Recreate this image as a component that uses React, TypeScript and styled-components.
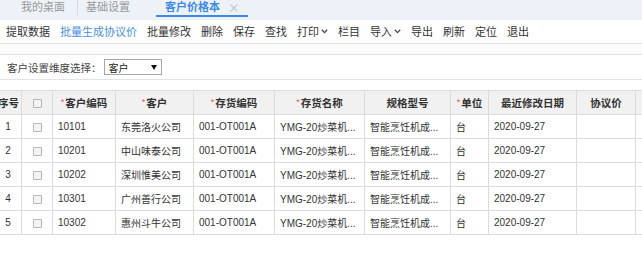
import React from "react";
import styled, { createGlobalStyle } from "styled-components";

const GlobalStyle = createGlobalStyle`
  html, body { margin: 0; padding: 0; background: #fff; }
  body { font-family: "Liberation Sans", "Noto Sans CJK SC", sans-serif; color: #333; }
  * { box-sizing: border-box; }
`;

const Page = styled.div`
  width: 642px;
  height: 254px;
  overflow: hidden;
  background: #fff;
`;

const TabBar = styled.div`
  display: flex;
  align-items: flex-start;
  height: 20px;
  padding-left: 8px;
  background: #edf1f8;
`;

const Tab = styled.div<{ $active?: boolean; $pl: number; $pr: number }>`
  display: flex;
  align-items: center;
  height: 17px;
  padding: 0 ${(p) => p.$pr}px 0 ${(p) => p.$pl}px;
  font-size: 11px;
  line-height: 15px;
  color: ${(p) => (p.$active ? "#3d8ae6" : "#9a9a9a")};
  font-weight: ${(p) => (p.$active ? 700 : 400)};
  border-bottom: 2px solid ${(p) => (p.$active ? "#3d8ae6" : "transparent")};
`;

const TabSep = styled.div`
  width: 1px;
  height: 15px;
  background: #d6dbe4;
`;

const TabGap = styled.div<{ $w: number }>`
  width: ${(p) => p.$w}px;
`;

const CloseIcon = styled.svg`
  margin-left: 10px;
  display: block;
`;

const Toolbar = styled.div`
  display: flex;
  align-items: center;
  height: 24px;
  padding-left: 6px;
  gap: 10px;
  border-bottom: 1px solid #e2e2e2;
  font-size: 11px;
`;

const ToolItem = styled.div<{ $blue?: boolean }>`
  display: flex;
  align-items: center;
  line-height: 14px;
  white-space: nowrap;
  color: ${(p) => (p.$blue ? "#4a8fe3" : "#333")};
`;

const Chevron = styled.svg`
  display: block;
  margin-left: 2px;
`;

const Band = styled.div`
  height: 11px;
  background: #fcfcfc;
  border-bottom: 1px solid #e4e4e4;
`;

const FilterRow = styled.div`
  display: flex;
  align-items: center;
  height: 25px;
  padding-left: 7px;
  border-bottom: 1px solid #e4e4e4;
  font-size: 10.5px;
  color: #444;
`;

const SelectBox = styled.div`
  display: flex;
  align-items: center;
  justify-content: space-between;
  width: 58px;
  height: 16px;
  margin-left: 2px;
  padding: 0 4px 0 4px;
  border: 1px solid #a8a8a8;
  background: #fff;
  font-size: 10px;
  color: #222;
`;

const TableWrap = styled.div`
  margin-top: 10px;
  overflow: hidden;
  width: 642px;
`;

const Table = styled.table`
  margin-left: -6px;
  border-collapse: collapse;
  table-layout: fixed;
  width: 729px;
  font-size: 10px;
`;

const Th = styled.th`
  height: 24px;
  padding: 0 3px;
  background: #f1f1f1;
  border: 1px solid #dcdcdc;
  font-size: 10.5px;
  font-weight: 700;
  color: #333;
  text-align: center;
  white-space: nowrap;
  overflow: hidden;
`;

const Td = styled.td<{ $center?: boolean }>`
  height: 24px;
  padding: 0 ${(p) => (p.$center ? 0 : 5)}px;
  border: 1px solid #dcdcdc;
  color: #333;
  text-align: ${(p) => (p.$center ? "center" : "left")};
  white-space: nowrap;
  overflow: hidden;
`;

const Req = styled.span`
  color: #e4575a;
  font-weight: 400;
  font-size: 9px;
  margin-right: 1px;
  vertical-align: 2px;
`;

const Check = styled.span`
  display: inline-block;
  width: 9px;
  height: 9px;
  border: 1px solid #b5b5b5;
  border-radius: 1px;
  background: #f4f4f4;
  vertical-align: middle;
`;

const tools: { label: string; blue?: boolean; menu?: boolean }[] = [
  { label: "提取数据" },
  { label: "批量生成协议价", blue: true },
  { label: "批量修改" },
  { label: "删除" },
  { label: "保存" },
  { label: "查找" },
  { label: "打印", menu: true },
  { label: "栏目" },
  { label: "导入", menu: true },
  { label: "导出" },
  { label: "刷新" },
  { label: "定位" },
  { label: "退出" },
];

const cols = [27, 31, 63, 78, 81, 90, 86, 38, 88, 59, 88];

const headers: { label: string; req?: boolean }[] = [
  { label: "序号" },
  { label: "" },
  { label: "客户编码", req: true },
  { label: "客户", req: true },
  { label: "存货编码", req: true },
  { label: "存货名称", req: true },
  { label: "规格型号" },
  { label: "单位", req: true },
  { label: "最近修改日期" },
  { label: "协议价" },
  { label: "" },
];

const rows = [
  ["1", "10101", "东莞洛火公司"],
  ["2", "10201", "中山味泰公司"],
  ["3", "10202", "深圳惟美公司"],
  ["4", "10301", "广州善行公司"],
  ["5", "10302", "惠州斗牛公司"],
];

export default function App() {
  return (
    <Page>
      <GlobalStyle />
      <TabBar>
        <Tab $pl={13} $pr={12}>我的桌面</Tab>
        <TabSep />
        <Tab $pl={8} $pr={0}>基础设置</Tab>
        <TabGap $w={26} />
        <Tab $active $pl={9} $pr={10}>
          客户价格本
          <CloseIcon width="8" height="8" viewBox="0 0 8 8">
            <path d="M0.5 0.5 L7.5 7.5 M7.5 0.5 L0.5 7.5" stroke="#c3c7cf" strokeWidth="1.1" />
          </CloseIcon>
        </Tab>
      </TabBar>
      <Toolbar>
        {tools.map((t) => (
          <ToolItem key={t.label} $blue={t.blue}>
            {t.label}
            {t.menu && (
              <Chevron width="7" height="5" viewBox="0 0 7 5">
                <path d="M0.8 0.8 L3.5 3.6 L6.2 0.8" fill="none" stroke="#444" strokeWidth="1.3" />
              </Chevron>
            )}
          </ToolItem>
        ))}
      </Toolbar>
      <Band />
      <FilterRow>
        客户设置维度选择：
        <SelectBox>
          <span>客户</span>
          <svg width="6" height="5" viewBox="0 0 6 5">
            <path d="M0 0 L6 0 L3 5 Z" fill="#111" />
          </svg>
        </SelectBox>
      </FilterRow>
      <TableWrap>
        <Table>
          <colgroup>
            {cols.map((w, i) => (
              <col key={i} style={{ width: w }} />
            ))}
          </colgroup>
          <thead>
            <tr>
              {headers.map((h, i) => (
                <Th key={i}>
                  {i === 1 ? (
                    <Check />
                  ) : (
                    <>
                      {h.req && <Req>*</Req>}
                      {h.label}
                    </>
                  )}
                </Th>
              ))}
            </tr>
          </thead>
          <tbody>
            {rows.map((r) => (
              <tr key={r[0]}>
                <Td $center>{r[0]}</Td>
                <Td $center>
                  <Check />
                </Td>
                <Td>{r[1]}</Td>
                <Td>{r[2]}</Td>
                <Td>001-OT001A</Td>
                <Td>YMG-20炒菜机...</Td>
                <Td>智能烹饪机成...</Td>
                <Td>台</Td>
                <Td>2020-09-27</Td>
                <Td></Td>
                <Td></Td>
              </tr>
            ))}
          </tbody>
        </Table>
      </TableWrap>
    </Page>
  );
}
